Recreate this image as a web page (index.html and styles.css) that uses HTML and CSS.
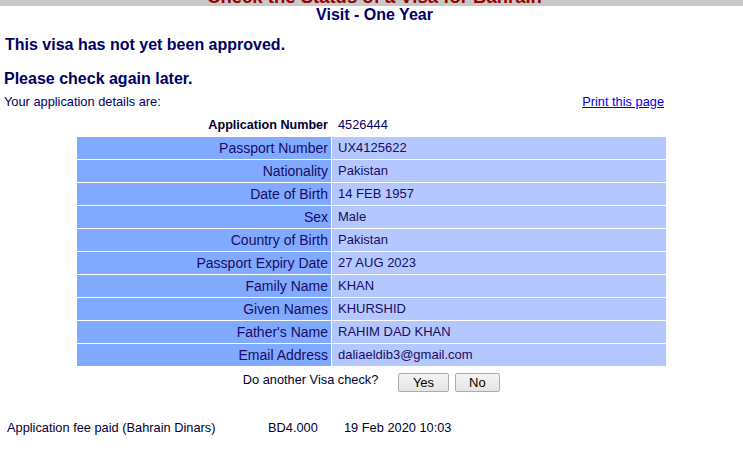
FILE: index.html
```html
<!DOCTYPE html>
<html>
<head>
<meta charset="utf-8">
<title>Visa Status</title>
<link rel="stylesheet" href="styles.css">
</head>
<body>
<div class="topbar"><span class="site-title">Check the Status of a Visa for Bahrain</span></div>
<h2 class="visa-type">Visit - One Year</h2>
<h3 class="status">This visa has not yet been approved.</h3>
<h3 class="status second">Please check again later.</h3>
<div class="info-row">
  <span>Your application details are:</span>
  <a href="#" class="print-link">Print this page</a>
</div>
<div class="details">
  <div class="lbl plain">Application Number</div><div class="val plain">4526444</div>
  <div class="lbl">Passport Number</div><div class="val">UX4125622</div>
  <div class="lbl">Nationality</div><div class="val">Pakistan</div>
  <div class="lbl">Date of Birth</div><div class="val">14 FEB 1957</div>
  <div class="lbl">Sex</div><div class="val">Male</div>
  <div class="lbl">Country of Birth</div><div class="val">Pakistan</div>
  <div class="lbl">Passport Expiry Date</div><div class="val">27 AUG 2023</div>
  <div class="lbl">Family Name</div><div class="val">KHAN</div>
  <div class="lbl">Given Names</div><div class="val">KHURSHID</div>
  <div class="lbl">Father's Name</div><div class="val">RAHIM DAD KHAN</div>
  <div class="lbl">Email Address</div><div class="val">daliaeldib3@gmail.com</div>
</div>
<div class="again">
  <span class="again-text">Do another Visa check?</span>
  <button class="btn yes" type="button">Yes</button>
  <button class="btn" type="button">No</button>
</div>
<div class="fee">
  <span class="fee-label">Application fee paid (Bahrain Dinars)</span>
  <span class="fee-amount">BD4.000</span>
  <span class="fee-date">19 Feb 2020 10:03</span>
</div>
</body>
</html>
```
FILE: styles.css
```css
html, body {
  margin: 0;
  padding: 0;
  background: #ffffff;
}
body {
  font-family: "Liberation Sans", Arial, sans-serif;
  color: #000066;
  width: 743px;
}
.topbar {
  height: 6px;
  background: #c8c8c8;
  overflow: hidden;
  display: flex;
  justify-content: center;
  align-items: flex-end;
  padding-left: 6px;
}
.site-title {
  font-size: 18.5px;
  font-weight: bold;
  line-height: 18px;
  color: #990000;
  margin-bottom: 0;
  white-space: nowrap;
}
.visa-type {
  margin: 0;
  font-size: 16px;
  line-height: 18px;
  font-weight: bold;
  text-align: center;
  padding-left: 6px;
}
.status {
  margin: 12px 0 0 5px;
  font-size: 16px;
  line-height: 18px;
  font-weight: bold;
}
.status.second {
  margin: 16px 0 0 4px;
}
.info-row {
  display: flex;
  justify-content: space-between;
  align-items: baseline;
  width: 660px;
  margin: 7px 0 0 4px;
  font-size: 12.8px;
  line-height: 14px;
}
.print-link {
  color: #0000ee;
  text-decoration: underline;
}
.details {
  display: grid;
  grid-template-columns: 254px 334px;
  grid-auto-rows: 22px;
  gap: 1px;
  width: 589px;
  margin: 5px 0 0 77px;
  font-size: 13px;
  line-height: 22px;
  color: #1a0a66;
}
.lbl {
  background: #80aaff;
  text-align: right;
  padding-right: 3px;
  font-size: 14px;
  white-space: nowrap;
}
.val {
  background: #b4c8ff;
  padding-left: 6px;
  white-space: nowrap;
}
.lbl.plain {
  background: transparent;
  font-size: 12.6px;
  font-weight: bold;
  color: #000033;
}
.val.plain {
  background: transparent;
  font-size: 12.8px;
  color: #000066;
}
.again {
  display: flex;
  justify-content: center;
  align-items: flex-start;
  margin-top: 7px;
  font-size: 12.8px;
}
.again-text {
  line-height: 14px;
  margin-right: 20px;
  color: #000033;
}
.btn {
  font-family: "Liberation Sans", Arial, sans-serif;
  font-size: 13px;
  height: 19px;
  padding: 0 13.5px;
  margin: 0;
  line-height: 17px;
  color: #000000;
  background: linear-gradient(#f4f4f4, #e4e4e4);
  border: 1px solid #acacac;
  border-radius: 2px;
}
.btn.yes {
  margin-right: 6px;
}
.fee {
  display: flex;
  margin: 29px 0 0 7px;
  font-size: 12.8px;
  line-height: 14px;
  color: #000033;
}
.fee-label {
  width: 261px;
}
.fee-amount {
  width: 76px;
}
```
